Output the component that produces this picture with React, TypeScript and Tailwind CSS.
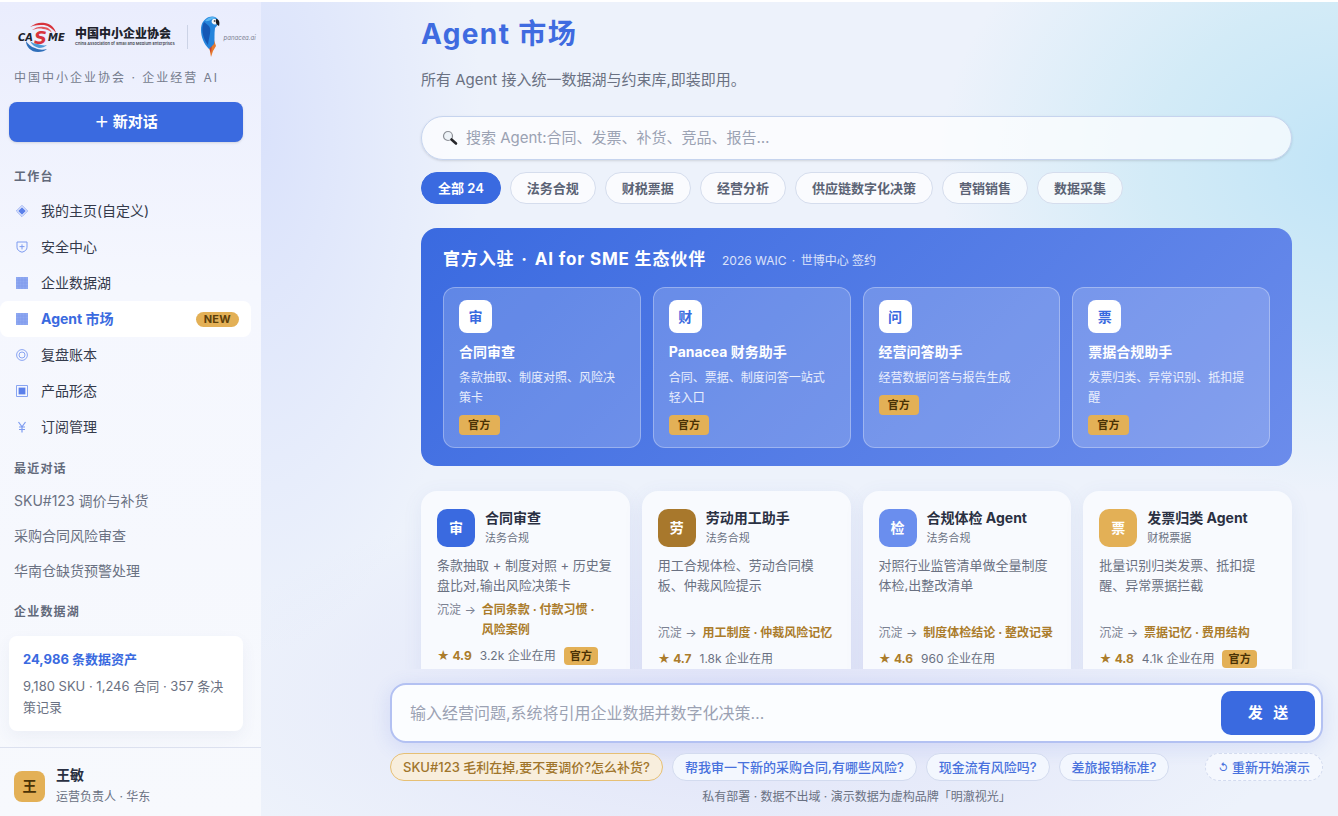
import { useState } from "react";

interface NavItem {
  icon: string;
  label: string;
  badge?: string;
}

interface Partner {
  mark: string;
  name: string;
  desc: string;
}

interface Agent {
  mark: string;
  color: string;
  name: string;
  category: string;
  desc: string;
  memory: string[];
  rating: string;
  users: string;
  official?: boolean;
  compact?: boolean;
}

const navItems: NavItem[] = [
  { icon: "diamond", label: "我的主页(自定义)" },
  { icon: "shield", label: "安全中心" },
  { icon: "grid", label: "企业数据湖" },
  { icon: "grid", label: "Agent 市场", badge: "NEW" },
  { icon: "ring", label: "复盘账本" },
  { icon: "square", label: "产品形态" },
  { icon: "yen", label: "订阅管理" },
];

const recentChats = ["SKU#123 调价与补货", "采购合同风险审查", "华南仓缺货预警处理"];

const categories = [
  "全部 24",
  "法务合规",
  "财税票据",
  "经营分析",
  "供应链数字化决策",
  "营销销售",
  "数据采集",
];

const partners: Partner[] = [
  { mark: "审", name: "合同审查", desc: "条款抽取、制度对照、风险决策卡" },
  { mark: "财", name: "Panacea 财务助手", desc: "合同、票据、制度问答一站式轻入口" },
  { mark: "问", name: "经营问答助手", desc: "经营数据问答与报告生成" },
  { mark: "票", name: "票据合规助手", desc: "发票归类、异常识别、抵扣提醒" },
];

const agents: Agent[] = [
  {
    mark: "审",
    color: "bg-[#3a6ae0]",
    name: "合同审查",
    category: "法务合规",
    desc: "条款抽取 + 制度对照 + 历史复盘比对,输出风险决策卡",
    memory: ["合同条款", "付款习惯", "风险案例"],
    rating: "4.9",
    users: "3.2k",
    official: true,
    compact: true,
  },
  {
    mark: "劳",
    color: "bg-[#a8782c]",
    name: "劳动用工助手",
    category: "法务合规",
    desc: "用工合规体检、劳动合同模板、仲裁风险提示",
    memory: ["用工制度", "仲裁风险记忆"],
    rating: "4.7",
    users: "1.8k",
  },
  {
    mark: "检",
    color: "bg-[#6a8eee]",
    name: "合规体检 Agent",
    category: "法务合规",
    desc: "对照行业监管清单做全量制度体检,出整改清单",
    memory: ["制度体检结论", "整改记录"],
    rating: "4.6",
    users: "960",
  },
  {
    mark: "票",
    color: "bg-[#e3b056]",
    name: "发票归类 Agent",
    category: "财税票据",
    desc: "批量识别归类发票、抵扣提醒、异常票据拦截",
    memory: ["票据记忆", "费用结构"],
    rating: "4.8",
    users: "4.1k",
    official: true,
  },
];

const prompts = ["帮我审一下新的采购合同,有哪些风险?", "现金流有风险吗?", "差旅报销标准?"];

function NavIcon({ name }: { name: string }) {
  return (
    <svg viewBox="0 0 12 12" className="h-3 w-3 shrink-0" fill="none" stroke="#7d9bf0" aria-hidden="true">
      {name === "diamond" && (
        <>
          <path d="M6 .4 11.6 6 6 11.6.4 6Z" strokeWidth=".8" />
          <path d="M6 2.200 9.800 6 6 9.800 2.200 6Z" fill="#5b80ea" stroke="none" />
        </>
      )}
      {name === "shield" && (
        <>
          <path d="M1 1h10v5.2c0 2.600-2 4.200-5 5-3-.8-5-2.400-5-5Z" />
          <path d="M6 3.400v5M3.500 5.600h5" />
        </>
      )}
      {name === "grid" && (
        <>
          <path d="M0 0h12v12H0Z" fill="#8ea8f1" stroke="none" />
          <path d="M0 3h12M0 6h12M0 9h12M3 0v12M6 0v12M9 0v12" stroke="#7994ea" strokeWidth=".5" />
        </>
      )}
      {name === "ring" && (
        <>
          <circle cx="6" cy="6" r="5.400" strokeWidth=".9" />
          <circle cx="6" cy="6" r="3" strokeWidth=".9" />
        </>
      )}
      {name === "square" && (
        <>
          <path d="M.5.5h11v11H.5Z" strokeWidth=".9" />
          <path d="M2.600 2.600h6.800v6.800H2.600Z" fill="#5b80ea" stroke="none" />
        </>
      )}
      {name === "yen" && <path d="M2.500 1 6 5.800 9.500 1M6 5.800V11.500M3 6h6M3 8.500h6" strokeWidth="1.200" />}
    </svg>
  );
}

function CasmeMark() {
  return (
    <svg viewBox="0 0 48 30" className="h-[30px] w-12 shrink-0 overflow-visible" role="img" aria-label="CASME">
      <path d="M12 5C17 1 22 0 27 1c6 1 10 5 11 10-3-4-7-7-12-8-5 0-9 0-14 2Z" fill="#d8333c" />
      <path d="M14 8c4-3 8-4 12-3 4 0 7 3 8 6-3-3-6-4-9-4-4-1-7 0-11 1Z" fill="#e2555c" />
      <path d="M8 19c0 6 5 11 12 11 4 0 7-1 9-3-4 1-8 1-12-1-4-1-7-4-9-7Z" fill="#2f6fba" />
      <path d="M12 19c2 4 5 6 9 7 3 0 6-1 8-3-3 1-6 0-9-1-3 0-6-1-8-3Z" fill="#4f9ad6" />
      <g fontFamily="DejaVu Sans, sans-serif" fontWeight="700" fontStyle="italic">
        <text x="0" y="19" fontSize="10" fill="#20222b">CA</text>
        <text x="16" y="22" fontSize="18" fill="#d8333c">S</text>
        <text x="30" y="19" fontSize="10" fill="#20222b">ME</text>
      </g>
    </svg>
  );
}

function ParrotMark() {
  return (
    <svg viewBox="0 0 20 42" className="h-[42px] w-5 shrink-0" aria-hidden="true">
      <path d="M9 30l2 11 2-6 3-5-2-6Z" fill="#e67a2e" />
      <path d="M8 29l3 8 1-8Z" fill="#c9432f" />
      <path d="M9 1c4-1.500 8 0 9 3 1 3-1 6-3 8-1 6 0 12-1 16l-5 5C4 28 1 21 1 14 1 7 4 3 9 1Z" fill="#2484dc" />
      <path d="M4 6C1 12 2 21 8 29c1-8 3-13 2-17-1-3-4-4-6-6Z" fill="#1558b5" />
      <path d="M5 5c3-4 8-5 11-3-4 0-6 4-11 3Z" fill="#5bb8f2" />
      <path d="M13 3c3-1 5 1 5 4-2 2-4 2-6 0-1-2 0-3 1-4Z" fill="#f2f4f6" />
      <path d="M16 3c3 0 4 3 3 7-2-1-4-3-3-7Z" fill="#17181c" />
      <circle cx="14.500" cy="5" r=".8" fill="#17181c" />
    </svg>
  );
}

function SearchIcon() {
  return (
    <svg viewBox="0 0 16 16" className="h-4 w-4 shrink-0" fill="none" aria-hidden="true">
      <circle cx="6" cy="6" r="4.500" fill="#eef3f8" stroke="#8d9097" strokeWidth="1.200" />
      <path d="M9.500 9.500l4.500 4" stroke="#26272b" strokeWidth="2.600" strokeLinecap="round" />
    </svg>
  );
}

function Dot() {
  return <span className="mx-0.5"> · </span>;
}

function OfficialBadge({ small = false }: { small?: boolean }) {
  return (
    <span
      className={`inline-block rounded bg-[#e3b056] text-[11px] font-bold tracking-wide text-[#4a3205] ${
        small ? "px-1.5 leading-[18px]" : "px-[9px] leading-5"
      }`}
    >
      官方
    </span>
  );
}

function Sidebar() {
  const [active, setActive] = useState("Agent 市场");

  return (
    <aside className="flex w-[261px] shrink-0 flex-col bg-linear-to-b from-[#eaedfd] via-[#f5f7fe] via-35% to-[#f7f9fd]">
      <div className="flex items-center pt-[14px] pl-[18px]">
        <CasmeMark />
        <div className="ml-[9px] shrink-0">
          <div className="text-xs leading-[14px] font-black text-[#20222b]">中国中小企业协会</div>
          <div className="text-[4px] leading-[6px] font-semibold whitespace-nowrap text-[#41444f]">
            China Association of Small and Medium Enterprises
          </div>
        </div>
        <div className="mx-3 h-6 w-px bg-[#ccd3e6]" />
        <ParrotMark />
        <span className="ml-1 text-[6px] text-[#7c8190] italic">panacea.ai</span>
      </div>
      <p className="mt-2.5 pl-[14px] text-xs leading-5 tracking-[2px] text-[#757c8d]">
        中国中小企业协会 · 企业经营 AI
      </p>
      <button className="mt-[14px] mr-[18px] ml-[9px] h-10 rounded-lg bg-[#3a6ae0] text-[15px] font-bold text-white shadow-sm">
        ＋ 新对话
      </button>

      <h2 className="mt-[25px] pl-[14px] text-xs leading-5 font-semibold tracking-widest text-[#626a7b]">工作台</h2>
      <nav className="mt-1.5 mr-2.5">
        {navItems.map((item) => (
          <button
            key={item.label}
            onClick={() => setActive(item.label)}
            className={`flex h-9 w-full items-center rounded-lg pr-3 pl-4 text-sm ${
              active === item.label ? "bg-white font-bold text-[#3a6ae0]" : "text-[#343a4b]"
            }`}
          >
            <NavIcon name={item.icon} />
            <span className="ml-[13px]">{item.label}</span>
            {item.badge && (
              <span className="ml-auto rounded-full bg-[#e3b056] px-2 text-[11px] leading-[15px] font-bold tracking-wide text-[#5c3f0a]">
                {item.badge}
              </span>
            )}
          </button>
        ))}
      </nav>

      <h2 className="mt-[14px] pl-[14px] text-xs leading-5 font-semibold tracking-widest text-[#626a7b]">最近对话</h2>
      <div className="mt-1">
        {recentChats.map((chat) => (
          <a key={chat} href="#" className="block pl-[14px] text-sm leading-[35px] text-[#6a7182]">
            {chat}
          </a>
        ))}
      </div>

      <h2 className="mt-[14px] pl-[14px] text-xs leading-5 font-semibold tracking-widest text-[#626a7b]">企业数据湖</h2>
      <section className="mt-[14px] mr-[18px] ml-[9px] rounded-lg bg-white px-[14px] py-[13px] shadow-[0_6px_16px_rgba(60,80,140,0.06)]">
        <p className="text-[13px] leading-5 font-bold text-[#3a6ae0]">24,986 条数据资产</p>
        <p className="mt-[7px] text-[13px] leading-[21px] text-[#6a7182]">9,180 SKU · 1,246 合同 · 357 条决策记录</p>
      </section>

      <footer className="mt-auto flex items-center border-t border-[#dce1ef] pt-4 pb-2 pl-[14px]">
        <div className="flex h-[31px] w-[31px] items-center justify-center rounded-lg bg-[#e3b056] text-sm font-bold text-[#4a3205]">
          王
        </div>
        <div className="ml-[11px]">
          <p className="text-sm leading-[22px] font-bold text-[#2a3042]">王敏</p>
          <p className="text-xs leading-[22px] text-[#6a7182]">运营负责人 · 华东</p>
        </div>
      </footer>
    </aside>
  );
}

function PartnerBanner() {
  return (
    <section className="mt-6 rounded-2xl bg-linear-135 from-[#3a6ae0] to-[#6b8ceb] px-[22px] pt-[19px] pb-[18px] text-white">
      <div className="flex items-baseline">
        <h2 className="text-[17px] leading-6 font-bold tracking-wider">
          官方入驻
          <Dot />
          AI for SME 生态伙伴
        </h2>
        <span className="ml-4 text-xs text-white/80">
          2026 WAIC
          <Dot />
          世博中心 签约
        </span>
      </div>
      <div className="mt-4 grid grid-cols-4 gap-3">
        {partners.map((partner) => (
          <article key={partner.name} className="rounded-xl border border-white/30 bg-white/18 px-[15px] py-3">
            <div className="flex h-[33px] w-[33px] items-center justify-center rounded-lg bg-white text-sm font-bold text-[#3a6ae0]">
              {partner.mark}
            </div>
            <h3 className="mt-[9px] text-sm leading-5 font-bold">{partner.name}</h3>
            <p className="mt-1.5 text-xs leading-5 text-white/85">{partner.desc}</p>
            <div className="mt-[7px] flex">
              <OfficialBadge />
            </div>
          </article>
        ))}
      </div>
    </section>
  );
}

function AgentCard({ agent }: { agent: Agent }) {
  return (
    <article className="flex min-h-[195px] flex-col rounded-2xl bg-[#f8fafe] px-4 py-[17px] shadow-[0_4px_20px_rgba(80,100,180,0.08)]">
      <div className="flex items-center">
        <div
          className={`flex h-[38px] w-[38px] shrink-0 items-center justify-center rounded-[10px] text-sm font-bold text-white ${agent.color}`}
        >
          {agent.mark}
        </div>
        <div className="ml-2.5">
          <h3 className="text-sm leading-5 font-bold whitespace-nowrap text-[#2a3042]">{agent.name}</h3>
          <p className="text-[11px] leading-5 text-[#6a7182]">{agent.category}</p>
        </div>
      </div>
      <p className="mt-[7px] text-[13px] leading-5 text-[#6a7182]">{agent.desc}</p>
      <div className={`flex text-xs leading-5 text-[#7a8191] ${agent.compact ? "mt-[5px]" : "mt-auto"}`}>
        <span className="shrink-0">沉淀 →</span>
        <p className="ml-1.5 font-bold text-[#ab7c2b]">
          {agent.memory.map((item, index) => (
            <span key={item}>
              {index > 0 && " · "}
              <span className="whitespace-nowrap">{item}</span>
            </span>
          ))}
        </p>
      </div>
      <div className="mt-1.5 flex h-5 shrink-0 items-center text-xs leading-5 text-[#6a7182]">
        <span className="font-bold text-[#ab7c2b]">★ {agent.rating}</span>
        <span className="mx-2">{agent.users} 企业在用</span>
        {agent.official && <OfficialBadge small />}
      </div>
    </article>
  );
}

function Composer() {
  const [message, setMessage] = useState("");

  return (
    <div className="mt-[14px] shrink-0">
      <form
        onSubmit={(e) => e.preventDefault()}
        className="flex items-center rounded-2xl border-2 border-[#b3c1f2] bg-[#fbfdff] p-1.5 shadow-[0_4px_20px_rgba(70,100,220,0.14)]"
      >
        <input
          type="text"
          aria-label="输入经营问题"
          value={message}
          onChange={(e) => setMessage(e.target.value)}
          placeholder="输入经营问题,系统将引用企业数据并数字化决策…"
          className="min-w-0 flex-1 bg-transparent pl-3 text-base text-[#2a3042] outline-none placeholder:text-[#9ba2b3]"
        />
        <button type="submit" className="h-11 w-[94px] rounded-[10px] bg-[#3a6ae0] text-[15px] font-bold whitespace-pre text-white">
          发   送
        </button>
      </form>
      <div className="mt-2.5 flex gap-[9px] text-[13px] leading-[26px] font-medium whitespace-nowrap">
        <button className="rounded-full border border-[#e6bf74] bg-[#f8eedd] px-3 text-[#a0752b]">
          SKU#123 毛利在掉,要不要调价?怎么补货?
        </button>
        {prompts.map((prompt) => (
          <button key={prompt} className="rounded-full border border-[#d3dbef] bg-[#f3f7fe] px-3 text-[#4871dd]">
            {prompt}
          </button>
        ))}
        <button className="ml-auto flex items-center gap-1 rounded-full border border-dashed border-[#d3dbef] bg-[#f5f8fe] px-3 text-[#4871dd]">
          <span className="text-[10px] leading-4">↺</span>
          重新开始演示
        </button>
      </div>
      <p className="mt-[5px] pb-2 text-center text-xs leading-[22px] text-[#6a7182]">
        私有部署 · 数据不出域 · 演示数据为虚构品牌「明澈视光」
      </p>
    </div>
  );
}

export default function App() {
  const [category, setCategory] = useState("全部 24");

  return (
    <div className="flex h-screen border-t-2 border-white font-[Inter,'Noto_Sans_CJK_SC',sans-serif]">
      <Sidebar />
      <main className="flex min-w-0 flex-1 flex-col bg-[#edf2fb] bg-[radial-gradient(ellipse_420px_330px_at_102%_20%,#c0e4f7_0%,#d3ebf7_50%,transparent_100%),radial-gradient(ellipse_220px_520px_at_0%_16%,#dae2fb_0%,transparent_100%),radial-gradient(ellipse_560px_220px_at_45%_86%,#e0e3f8_0%,transparent_100%)] pr-[15px] pl-[129px]">
        <div className="min-h-0 flex-1 overflow-hidden px-[31px]">
          <h1 className="mt-3 text-[28px] leading-10 font-bold tracking-wider text-[#3f6be0]">Agent 市场</h1>
          <p className="mt-[14px] text-[15px] leading-6 text-[#6a7182]">
            所有 Agent 接入统一数据湖与约束库,即装即用。
          </p>
          <label className="mt-6 flex h-11 items-center rounded-full border border-[#c6d4ee] bg-white/70 pl-5 shadow-sm">
            <SearchIcon />
            <input
              type="search"
              aria-label="搜索 Agent"
              placeholder="搜索 Agent:合同、发票、补货、竞品、报告…"
              className="ml-2 min-w-0 flex-1 bg-transparent pr-5 text-[15px] text-[#2a3042] outline-none placeholder:text-[#9ba2b3]"
            />
          </label>
          <div className="mt-3 flex gap-[9px] text-[13px] leading-[30px] font-semibold whitespace-nowrap">
            {categories.map((name) => (
              <button
                key={name}
                onClick={() => setCategory(name)}
                className={`rounded-full border px-4 ${
                  category === name
                    ? "border-[#3a6ae0] bg-[#3a6ae0] text-white"
                    : "border-[#d5dded] bg-white/70 text-[#5b6375]"
                }`}
              >
                {name}
              </button>
            ))}
          </div>
          <PartnerBanner />
          <div className="mt-[25px] grid grid-cols-4 gap-3">
            {agents.map((agent) => (
              <AgentCard key={agent.name} agent={agent} />
            ))}
          </div>
        </div>
        <Composer />
      </main>
    </div>
  );
}
